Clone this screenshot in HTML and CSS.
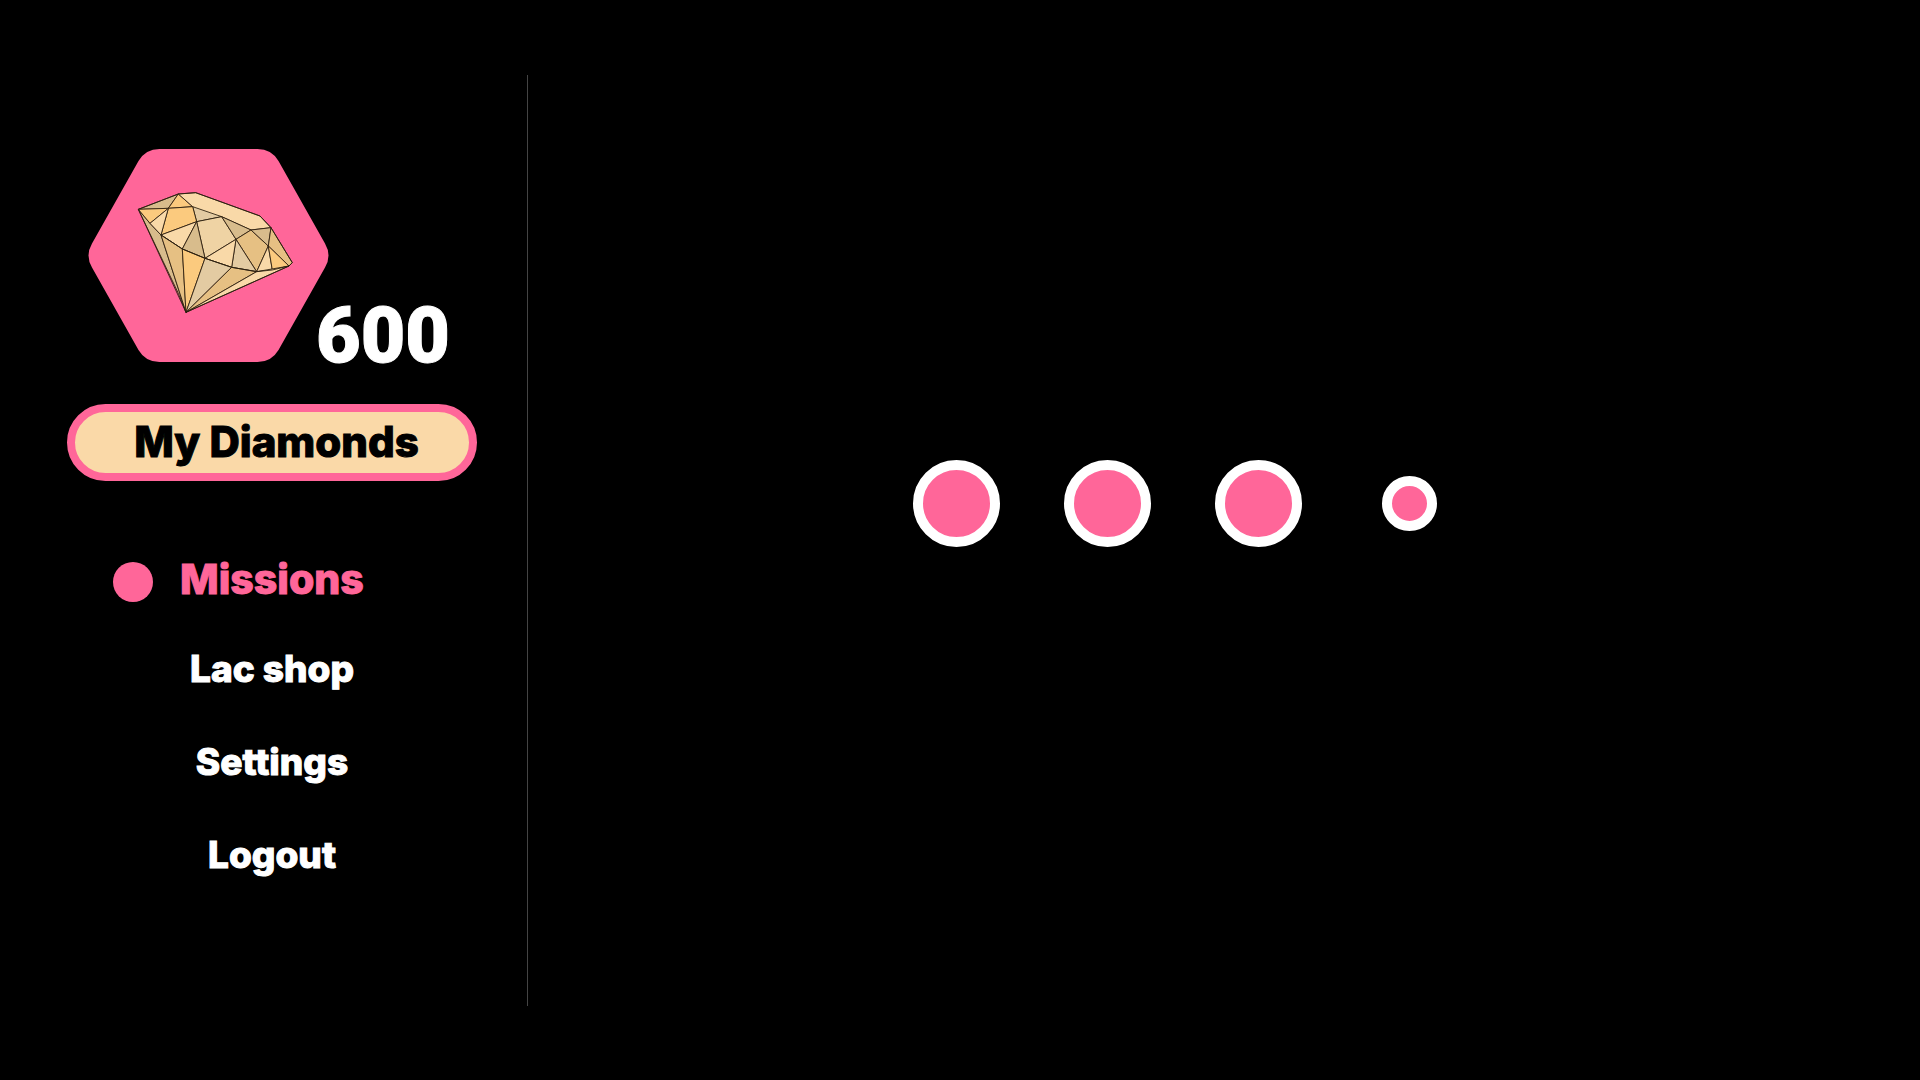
FILE: index.html
```html
<!DOCTYPE html>
<html lang="en">
<head>
    <meta charset="UTF-8">
    <meta name="viewport" content="width=device-width, initial-scale=1.0">
    <title>My Diamonds</title>
    <link rel="stylesheet" href="styles.css">
</head>
<body>
    <div class="page">
        <aside class="sidebar">
            <div class="balance">
                <svg class="hexagon" width="241" height="213" viewBox="0 0 241 213">
                    <path class="hex-shape" d="M71.5 0H169.5Q183.5 0 190.5 12L237 94.5Q244 106.5 237 118.5L190.5 201Q183.5 213 169.5 213H71.5Q57.5 213 50.5 201L4 118.5Q-3 106.5 4 94.5L50.5 12Q57.5 0 71.5 0Z"/>
                    <!-- diamond points are in 3x units -->
                    <g class="gem" transform="translate(37 31) scale(0.3333)">
                        <polygon class="f-tan" points="40,88 75,130 108,165 183,397 160,340"/>
                        <polygon class="f-tan" points="40,88 160,42 130,85"/>
                        <polygon class="f-orange" points="160,42 203,80 130,85"/>
                        <polygon class="f-light" points="160,42 212,38 405,108 438,143 378,150 290,110 215,125 203,80"/>
                        <polygon class="f-pale" points="203,80 290,110 215,125"/>
                        <polygon class="f-orange" points="130,85 203,80 215,125 108,165"/>
                        <polygon class="f-orange" points="40,88 130,85 75,130"/>
                        <polygon class="f-light" points="75,130 130,85 108,165"/>
                        <polygon class="f-light" points="108,165 215,125 172,207"/>
                        <polygon class="f-cream" points="215,125 290,110 333,178 240,235"/>
                        <polygon class="f-tan" points="215,125 240,235 172,207"/>
                        <polygon class="f-tan" points="290,110 378,150 333,178"/>
                        <polygon class="f-deep" points="378,150 430,198 395,275 333,178"/>
                        <polygon class="f-tan" points="378,150 438,143 430,198"/>
                        <polygon class="f-pale" points="333,178 395,275 320,262"/>
                        <polygon class="f-light" points="333,178 320,262 240,235"/>
                        <polygon class="f-deep" points="438,143 502,248 492,258 430,198"/>
                        <polygon class="f-light" points="430,198 442,270 395,275"/>
                        <polygon class="f-orange" points="430,198 492,258 442,270"/>
                        <polygon class="f-deep" points="108,165 172,207 183,397"/>
                        <polygon class="f-orange" points="172,207 240,235 183,397"/>
                        <polygon class="f-pale" points="240,235 320,262 183,397"/>
                        <polygon class="f-deep" points="320,262 395,275 183,397"/>
                        <polygon class="f-light" points="395,275 492,258 183,397"/>
                        <polyline class="edge" points="108,165 172,207 240,235 320,262 395,275 442,270 492,258"/>
                        <polygon class="outline" points="40,88 160,42 212,38 405,108 438,143 502,248 492,258 183,397"/>
                    </g>
                </svg>
                <span class="amount">600</span>
            </div>
            <div class="title-pill">My Diamonds</div>
            <nav class="menu">
                <a class="menu-item active"><span class="dot"></span>Missions</a>
                <a class="menu-item">Lac shop</a>
                <a class="menu-item">Settings</a>
                <a class="menu-item">Logout</a>
            </nav>
        </aside>
        <main class="content">
            <div class="pin-slot"><span class="pin"></span></div>
            <div class="pin-slot"><span class="pin"></span></div>
            <div class="pin-slot"><span class="pin"></span></div>
            <div class="pin-slot"><span class="pin small"></span></div>
        </main>
    </div>
</body>
</html>
```
FILE: styles.css
```css
body {
    margin: 0;
    background-color: #000;
    color: #fff;
    font-family: Inter, Roboto, sans-serif;
    font-weight: 800;
    overflow: hidden;
}
.page {
    display: flex;
    height: 1080px;
}
.sidebar {
    box-sizing: border-box;
    flex: none;
    width: 528px;
    height: 931px;
    margin-top: 75px;
    padding: 74px 50px 0 67px;
    border-right: 1px solid #444;
}
.balance {
    display: flex;
    align-items: flex-end;
    padding-left: 21px;
    height: 213px;
}
.hexagon {
    display: block;
    flex: none;
}
.hex-shape {
    fill: #ff6699;
}
.gem polygon {
    stroke: #2a1e0e;
    stroke-width: 2.6;
    stroke-linejoin: round;
}
.gem .outline {
    fill: none;
}
.gem .edge {
    fill: none;
    stroke: #2a1e0e;
    stroke-width: 2.6;
}
.f-light { fill: #f9d9a8; }
.f-orange { fill: #fbca7e; }
.f-pale { fill: #e3cba2; }
.f-cream { fill: #efd3a4; }
.f-tan { fill: #d8bc8c; }
.f-deep { fill: #e6c083; }
.amount {
    margin: 0 0 -3px -13px;
    font-family: Roboto, sans-serif;
    font-size: 77px;
    font-weight: 900;
    line-height: 57px;
    -webkit-text-stroke: 1px #fff;
}
.title-pill {
    box-sizing: border-box;
    width: 410px;
    height: 77px;
    margin-top: 42px;
    padding-left: 9px;
    border: 8px solid #ff6699;
    border-radius: 39px;
    background-color: #fad9a8;
    color: #000;
    font-size: 42px;
    line-height: 59px;
    text-align: center;
    -webkit-text-stroke: 1px #000;
}
.menu {
    display: flex;
    flex-direction: column;
    margin-top: 56px;
}
.menu-item {
    height: 93px;
    font-size: 37px;
    line-height: 93px;
    text-align: center;
    -webkit-text-stroke: 1px #fff;
}
.menu-item.active {
    display: flex;
    align-items: center;
    gap: 27px;
    height: 85px;
    padding-left: 46px;
    color: #ff6699;
    font-size: 41px;
    -webkit-text-stroke: 1px #ff6699;
}
.dot {
    flex: none;
    width: 40px;
    height: 40px;
    margin-top: 5px;
    border-radius: 50%;
    background-color: #ff6699;
}
.content {
    display: flex;
    align-items: center;
    align-self: flex-start;
    height: 87px;
    padding: 460px 0 0 353px;
}
.pin-slot {
    display: flex;
    justify-content: center;
    width: 151px;
}
.pin {
    box-sizing: border-box;
    width: 87px;
    height: 87px;
    border: 10px solid #fff;
    border-radius: 50%;
    background-color: #ff6699;
}
.pin.small {
    width: 55px;
    height: 55px;
}
```
